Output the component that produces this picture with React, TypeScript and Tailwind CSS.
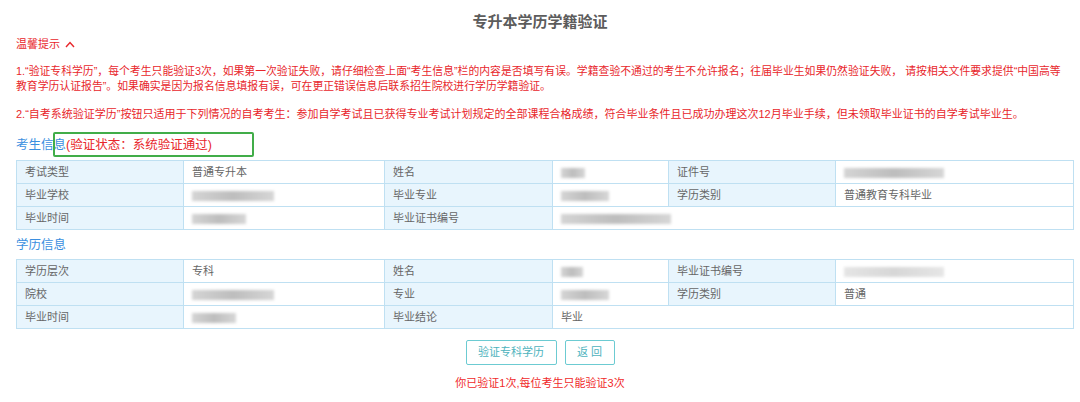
import React from "react";

// Redacted (mosaic) value in the reference
function Blur({ className }: { className: string }) {
  return (
    <span
      className={`inline-block h-[10px] align-middle bg-gradient-to-r from-[#d4d4d4] via-[#bdbdbd] to-[#d6d6d6] blur-[1.5px] ${className}`}
    />
  );
}

function Label({ children }: { children: React.ReactNode }) {
  return (
    <td className="h-[23px] border border-[#bfe0f2] bg-[#e8f5fd] pl-2 text-[#666]">
      {children}
    </td>
  );
}

function Value({
  children,
  colSpan,
}: {
  children?: React.ReactNode;
  colSpan?: number;
}) {
  return (
    <td colSpan={colSpan} className="h-[23px] border border-[#bfe0f2] bg-white pl-2 text-[#666]">
      {children}
    </td>
  );
}

function Cols() {
  return (
    <colgroup>
      <col className="w-[167px]" />
      <col className="w-[201px]" />
      <col className="w-[168px]" />
      <col className="w-[116px]" />
      <col className="w-[167px]" />
      <col className="w-[238px]" />
    </colgroup>
  );
}

export default function App() {
  return (
    <div
      className="w-[1080px] h-[402px] overflow-hidden bg-white px-4 text-[11px]"
      style={{ fontFamily: "'Liberation Sans', 'Noto Sans CJK SC', sans-serif" }}
    >
      {/* Title */}
      <h1 className="pt-3 h-8 text-center text-[15px] leading-5 font-bold text-[#5c5c5c]">
        专升本学历学籍验证
      </h1>

      {/* Tips */}
      <div className="mt-1 flex items-center gap-[5px] leading-4 text-[#e8262b]">
        <span>温馨提示</span>
        <svg width="10" height="7" viewBox="0 0 10 7" fill="none">
          <path d="M1 6 L5 1.5 L9 6" stroke="#e8262b" strokeWidth="1.4" />
        </svg>
      </div>
      <p className="mt-[12px] text-[10.85px] leading-[15px] text-[#e8262b]">
        <span className="block whitespace-nowrap">
          1.“验证专科学历”，每个考生只能验证3次，如果第一次验证失败，请仔细检查上面“考生信息”栏的内容是否填写有误。学籍查验不通过的考生不允许报名；往届毕业生如果仍然验证失败，
          请按相关文件要求提供“中国高等
        </span>
        <span className="block">
          教育学历认证报告”。如果确实是因为报名信息填报有误，可在更正错误信息后联系招生院校进行学历学籍验证。
        </span>
      </p>
      <p className="mt-[13px] text-[11px] leading-[15px] text-[#e8262b]">
        2.“自考系统验证学历”按钮只适用于下列情况的自考考生：参加自学考试且已获得专业考试计划规定的全部课程合格成绩，符合毕业条件且已成功办理这次12月毕业手续，但未领取毕业证书的自学考试毕业生。
      </p>

      {/* 考生信息 */}
      <div className="relative mt-[11px] flex h-[24px] items-center text-[12.5px]">
        <span className="text-[#3b8fe0]">考生信息</span>
        <span className="text-[#e8262b]">(验证状态：系统验证通过)</span>
        <div className="absolute left-[37px] top-[-1px] h-[25px] w-[201px] rounded-[2px] border-2 border-[#41ad49]" />
      </div>
      <table className="mt-[3px] w-full table-fixed border-collapse">
        <Cols />
        <tbody>
          <tr>
            <Label>考试类型</Label>
            <Value>普通专升本</Value>
            <Label>姓名</Label>
            <Value>
              <Blur className="w-[24px]" />
            </Value>
            <Label>证件号</Label>
            <Value>
              <Blur className="w-[100px]" />
            </Value>
          </tr>
          <tr>
            <Label>毕业学校</Label>
            <Value>
              <Blur className="w-[82px]" />
            </Value>
            <Label>毕业专业</Label>
            <Value>
              <Blur className="w-[48px]" />
            </Value>
            <Label>学历类别</Label>
            <Value>普通教育专科毕业</Value>
          </tr>
          <tr>
            <Label>毕业时间</Label>
            <Value>
              <Blur className="w-[54px]" />
            </Value>
            <Label>毕业证书编号</Label>
            <Value colSpan={3}>
              <Blur className="w-[110px]" />
            </Value>
          </tr>
        </tbody>
      </table>

      {/* 学历信息 */}
      <div className="mt-[3px] flex h-[24px] items-center text-[12.5px] text-[#3b8fe0]">
        学历信息
      </div>
      <table className="mt-[2px] w-full table-fixed border-collapse">
        <Cols />
        <tbody>
          <tr>
            <Label>学历层次</Label>
            <Value>专科</Value>
            <Label>姓名</Label>
            <Value>
              <Blur className="w-[22px]" />
            </Value>
            <Label>毕业证书编号</Label>
            <Value>
              <Blur className="w-[100px] opacity-60" />
            </Value>
          </tr>
          <tr>
            <Label>院校</Label>
            <Value>
              <Blur className="w-[82px]" />
            </Value>
            <Label>专业</Label>
            <Value>
              <Blur className="w-[48px]" />
            </Value>
            <Label>学历类别</Label>
            <Value>普通</Value>
          </tr>
          <tr>
            <Label>毕业时间</Label>
            <Value>
              <Blur className="w-[44px]" />
            </Value>
            <Label>毕业结论</Label>
            <Value colSpan={3}>毕业</Value>
          </tr>
        </tbody>
      </table>

      {/* Actions */}
      <div className="mt-[11px] flex justify-center gap-2">
        <button className="h-[25px] w-[91px] rounded-[2px] border-[1.5px] border-[#6ccbd2] text-[11px] text-[#4db3bd]">
          验证专科学历
        </button>
        <button className="h-[25px] w-[50px] rounded-[2px] border-[1.5px] border-[#6ccbd2] text-[11px] text-[#4db3bd]">
          返 回
        </button>
      </div>
      <p className="mt-[10px] text-center leading-4 text-[#f02a2a]">
        你已验证1次,每位考生只能验证3次
      </p>
    </div>
  );
}
